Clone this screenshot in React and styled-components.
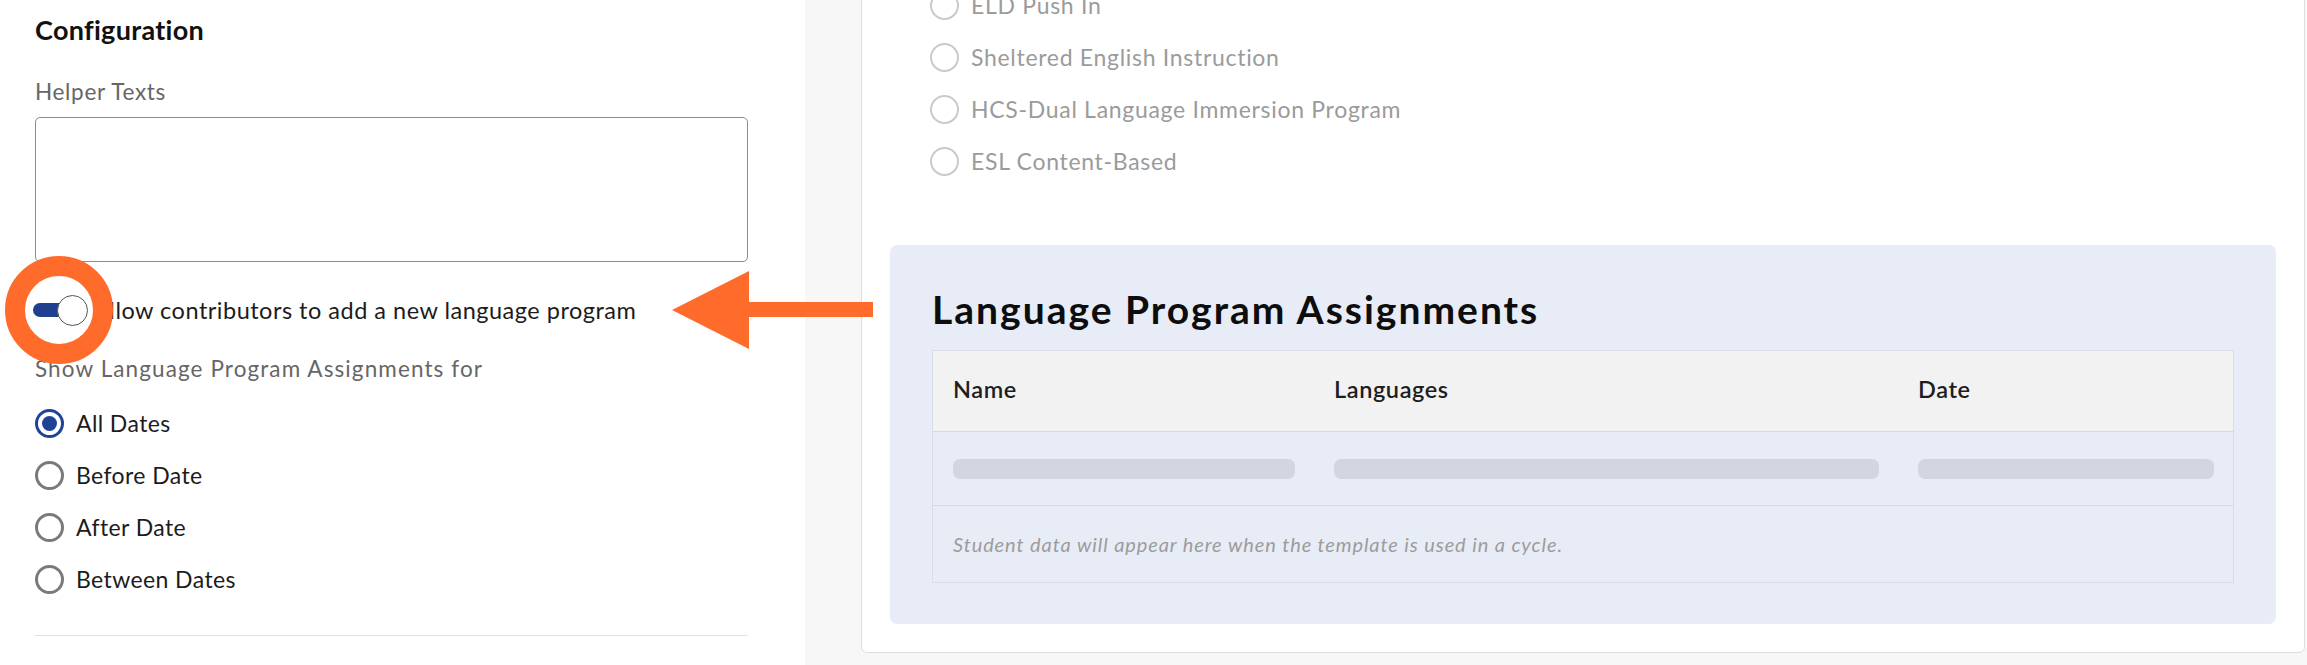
import React from "react";
import styled, { createGlobalStyle } from "styled-components";

const GlobalStyle = createGlobalStyle`
  html, body {
    margin: 0;
    padding: 0;
    background: #f7f7f7;
    font-family: Lato, "Open Sans", Arial, sans-serif;
    color: #1c1c1c;
  }
  * { box-sizing: border-box; }
`;

const Page = styled.div`
  position: relative;
  display: flex;
  width: 2307px;
  height: 665px;
  overflow: hidden;
  background: #f7f7f7;
`;

//왼쪽 설정 패널
const Sidebar = styled.aside`
  width: 805px;
  flex: none;
  background: #fff;
  padding: 14px 57px 0 35px;
  display: flex;
  flex-direction: column;
`;

const PanelTitle = styled.h2`
  margin: 0;
  font-size: 27px;
  line-height: 32px;
  font-weight: 700;
  letter-spacing: 0.3px;
  color: #111;
`;

const FieldLabel = styled.div`
  margin-top: ${(p) => p.$mt || 0}px;
  font-size: 22.5px;
  line-height: 26px;
  letter-spacing: ${(p) => p.$ls || 0.7}px;
  color: #666;
`;

const TextArea = styled.textarea`
  margin-top: 12px;
  width: 100%;
  height: 145px;
  border: 1px solid #8c8c8c;
  border-radius: 5px;
  resize: none;
  font: inherit;
`;

const ToggleRow = styled.label`
  margin-top: 33px;
  height: 30px;
  display: flex;
  align-items: center;
  font-size: 23.5px;
  letter-spacing: 0.5px;
  color: #1c1c1c;
`;

const Switch = styled.span`
  position: relative;
  width: 53px;
  height: 30px;
  flex: none;
  display: flex;
  align-items: center;

  &::before {
    content: "";
    width: 46px;
    height: 14px;
    border-radius: 7px;
    background: #213f8f;
    margin-left: -2px;
  }

  &::after {
    content: "";
    position: absolute;
    left: 22px;
    top: 0;
    width: 29px;
    height: 29px;
    border-radius: 50%;
    background: #fff;
    border: 1px solid #555;
  }
`;

const ToggleText = styled.span`
  margin-left: 5px;
`;

const RadioGroup = styled.div`
  margin-top: ${(p) => p.$mt || 0}px;
  display: flex;
  flex-direction: column;
`;

const RadioRow = styled.div`
  height: 52px;
  display: flex;
  align-items: center;
  gap: 12px;
  font-size: 23px;
  letter-spacing: ${(p) => (p.$muted ? 0.7 : 0.4)}px;
  color: ${(p) => (p.$muted ? "#9b9b9b" : "#1c1c1c")};
`;

const RadioDot = styled.span`
  width: 29px;
  height: 29px;
  flex: none;
  border-radius: 50%;
  border: ${(p) => (p.$muted ? "2px solid #cacaca" : p.$on ? "3px solid #1f4496" : "3px solid #7a7a7a")};
  display: flex;
  align-items: center;
  justify-content: center;

  &::after {
    content: "";
    display: ${(p) => (p.$on ? "block" : "none")};
    width: 15px;
    height: 15px;
    border-radius: 50%;
    background: #1f4496;
  }
`;

const Divider = styled.hr`
  margin: 30px 0 0;
  border: none;
  border-top: 1px solid #e2e2e2;
`;

//오른쪽 미리보기 영역
const Preview = styled.main`
  flex: 1;
  padding: 0 2px 12px 56px;
  display: flex;
  flex-direction: column;
`;

const Card = styled.section`
  flex: 1;
  margin-top: -40px;
  background: #fff;
  border: 1px solid #dedede;
  border-radius: 6px;
  padding: 18px 28px 28px 28px;
  display: flex;
  flex-direction: column;
`;

const ProgramList = styled(RadioGroup)`
  padding-left: 40px;
`;

const AssignPanel = styled.div`
  margin-top: 58px;
  background: #e8ecf6;
  border-radius: 7px;
  padding: 41px 42px 41px 42px;
`;

const AssignTitle = styled.h3`
  margin: 0 0 18px;
  font-size: 39px;
  line-height: 46px;
  font-weight: 700;
  letter-spacing: 2px;
  color: #0d0d0d;
`;

const Table = styled.div`
  border: 1px solid #dadde3;
`;

const Row = styled.div`
  display: grid;
  grid-template-columns: 381px 584px 1fr;
  align-items: center;
  height: ${(p) => p.$h}px;
  background: ${(p) => (p.$head ? "#f2f2f2" : "transparent")};
  border-bottom: 1px solid #d6d9e0;
`;

const HeadCell = styled.div`
  padding: 0 20px 4px;
  font-size: 23.5px;
  font-weight: 600;
  letter-spacing: 0.6px;
  color: #1e1e1e;
`;

const Cell = styled.div`
  padding: 0 19px 0 20px;
`;

const Skeleton = styled.div`
  height: 20px;
  border-radius: 7px;
  background: #d1d6e0;
`;

const EmptyNote = styled.div`
  height: 76px;
  display: flex;
  align-items: center;
  padding: 0 20px;
  font-size: 20px;
  font-style: italic;
  letter-spacing: 0.9px;
  color: #9c9c9c;
`;

//주석 (주황색 원, 화살표)
const Annotation = styled.svg`
  position: absolute;
  left: 0;
  top: 0;
  pointer-events: none;
`;

const dates = ["All Dates", "Before Date", "After Date", "Between Dates"];
const programs = [
  "ELD Push In",
  "Sheltered English Instruction",
  "HCS-Dual Language Immersion Program",
  "ESL Content-Based",
];

export default function App() {
  return (
    <>
      <GlobalStyle />
      <Page>
        <Sidebar>
          <PanelTitle>Configuration</PanelTitle>
          <FieldLabel $mt={33}>Helper Texts</FieldLabel>
          <TextArea />

          <ToggleRow>
            <Switch />
            <ToggleText>Allow contributors to add a new language program</ToggleText>
          </ToggleRow>

          <FieldLabel $mt={31} $ls={1.1}>Show Language Program Assignments for</FieldLabel>
          <RadioGroup $mt={15}>
            {dates.map((d, i) => (
              <RadioRow key={d}>
                <RadioDot $on={i === 0} />
                {d}
              </RadioRow>
            ))}
          </RadioGroup>
          <Divider />
        </Sidebar>

        <Preview>
          <Card>
            <ProgramList>
              {programs.map((p) => (
                <RadioRow key={p} $muted>
                  <RadioDot $muted />
                  {p}
                </RadioRow>
              ))}
            </ProgramList>

            <AssignPanel>
              <AssignTitle>Language Program Assignments</AssignTitle>
              <Table>
                <Row $head $h={81}>
                  <HeadCell>Name</HeadCell>
                  <HeadCell>Languages</HeadCell>
                  <HeadCell>Date</HeadCell>
                </Row>
                <Row $h={74}>
                  <Cell><Skeleton /></Cell>
                  <Cell><Skeleton /></Cell>
                  <Cell><Skeleton /></Cell>
                </Row>
                <EmptyNote>Student data will appear here when the template is used in a cycle.</EmptyNote>
              </Table>
            </AssignPanel>
          </Card>
        </Preview>

        <Annotation width="900" height="420" viewBox="0 0 900 420">
          <circle cx="59" cy="310" r="44" fill="none" stroke="#ff6b2b" strokeWidth="20" />
          <polygon
            points="672,310 749,271 749,302 873,302 873,317 749,317 749,349"
            fill="#ff6b2b"
          />
        </Annotation>
      </Page>
    </>
  );
}
